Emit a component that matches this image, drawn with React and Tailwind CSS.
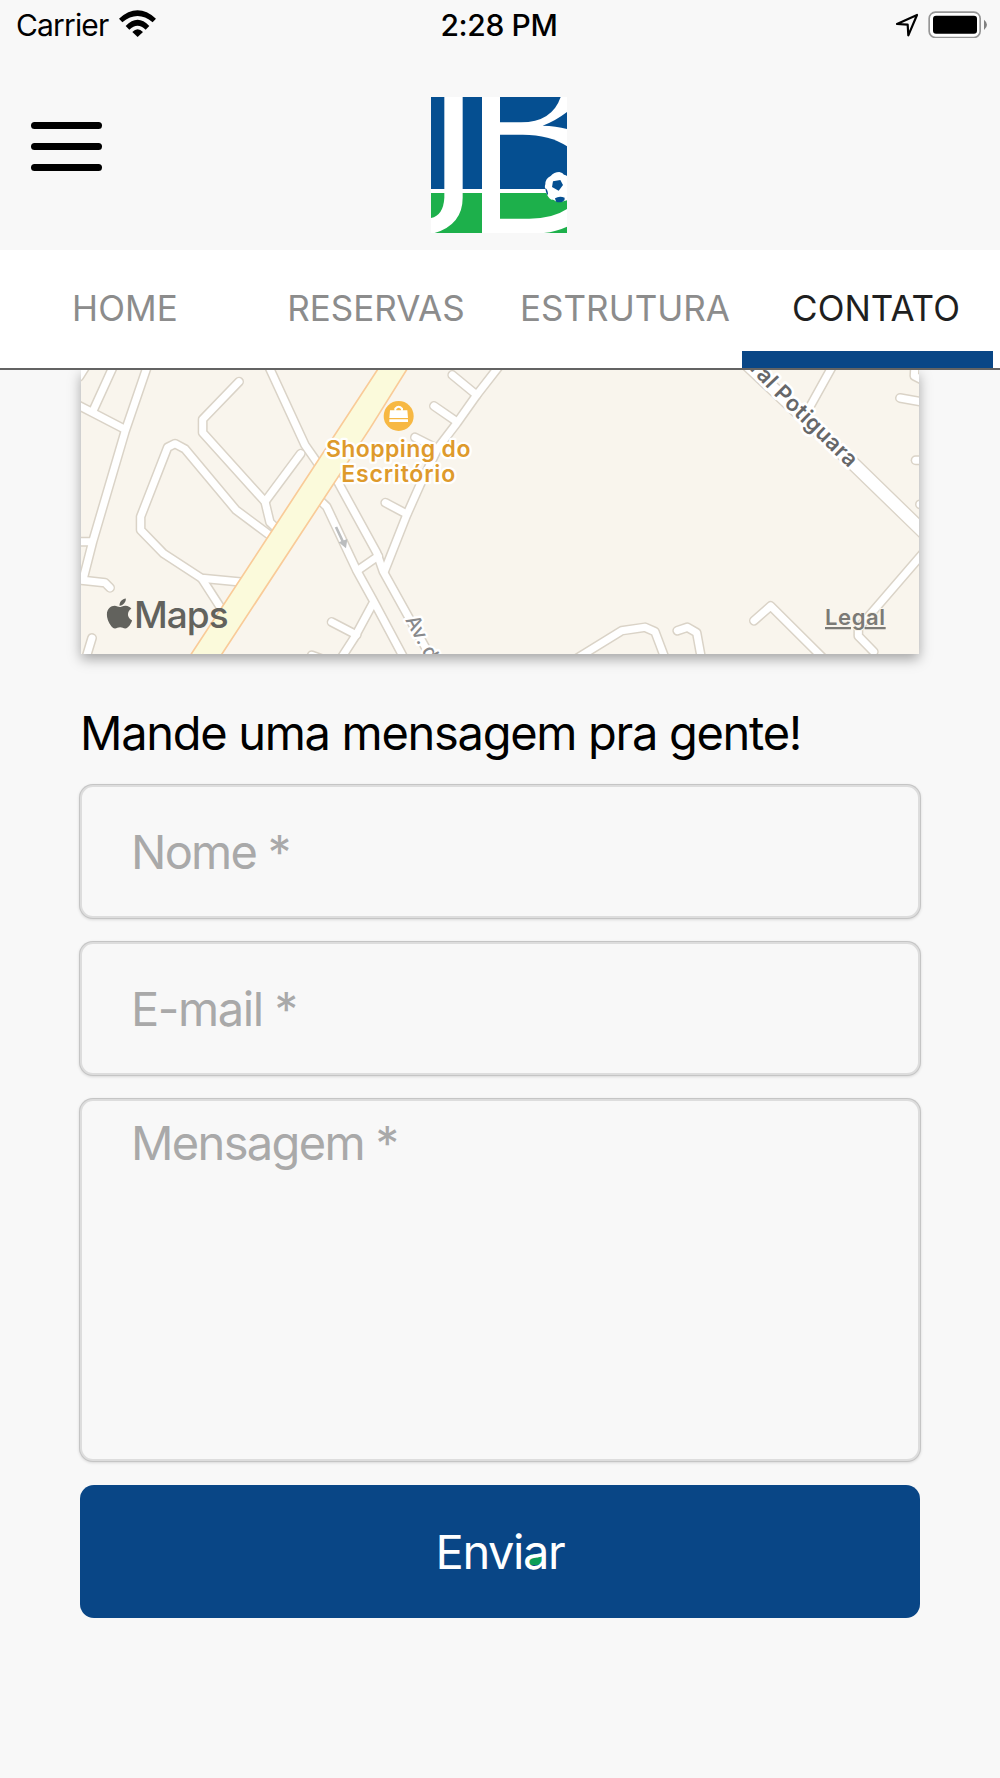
import React from "react";
import { FaApple } from "react-icons/fa";

function WifiIcon() {
  return (
    <svg viewBox="360 30 112 82" className="h-[27.3px] w-[37.3px]" fill="#000">
      <path d="M360 56 Q416 6 471 56 L461 67 Q416 29 370 67Z" />
      <path d="M380 78 Q416 41 451 78 L440 89 Q416 65 391 89Z" />
      <path d="M400 96 Q416 80 432 96 L416 111Z" />
    </svg>
  );
}

function LocationIcon() {
  return (
    <svg viewBox="585 38 72 72" className="h-6 w-6" fill="none" stroke="#000" strokeWidth="6.5" strokeLinejoin="round">
      <path d="M591 71 L651 44 L625 105 L623 73Z" />
    </svg>
  );
}

function BatteryIcon() {
  return (
    <svg viewBox="684 31 180 83" className="h-[27.7px] w-[60px]">
      <rect x="687.5" y="34.5" width="153" height="76" rx="19" fill="#fff" stroke="#969696" strokeWidth="5" />
      <rect x="699" y="45" width="132" height="54" rx="9" fill="#000" />
      <path d="M852 57 Q861 64 861 72.500 Q861 81 852 88Z" fill="#808080" />
    </svg>
  );
}

function StatusBar() {
  return (
    <div className="grid h-[49px] grid-cols-3 items-center text-[30px] leading-none text-black">
      <div className="flex items-center pl-4">
        <span className="tracking-[-0.850px]">Carrier</span>
        <span className="-mt-[2px] ml-[11px]"><WifiIcon /></span>
      </div>
      <div className="pr-[2px] text-center font-medium tracking-[-0.350px]">2:28 PM</div>
      <div className="flex items-center justify-end gap-[9px] pr-[12px]">
        <LocationIcon />
        <BatteryIcon />
      </div>
    </div>
  );
}

function Logo() {
  return (
    <svg viewBox="95 290 408 408" className="h-[136px] w-[136px]">
      <rect x="95" y="290" width="408" height="408" fill="#fff" />
      <g fill="#054f91">
        <rect x="95" y="290" width="40" height="276" />
        <rect x="190" y="290" width="58" height="276" />
        <path d="M302 290 H484 Q458 366 365 366 H302Z" />
        <path d="M503 335 Q468 362 430 376 Q470 377 503 386Z" />
        <path d="M302 403 H370 Q452 403 503 438 V566 H302Z" />
      </g>
      <g fill="#1db04b">
        <path d="M95 578 H135 V592 Q132 645 95 653Z" />
        <path d="M190 578 H248 V698 H106 Q190 672 190 592Z" />
        <path d="M302 578 H503 V626 Q460 655 390 655 H302Z" />
        <path d="M503 679 V698 H434 Q470 694 503 679Z" />
      </g>
      <path
        d="M480 515 Q490 517 494 523 Q500 524 503 527 V600 Q499 602 496 601 Q484 608 469 603 Q463 597 456 598 Q443 590 441 575 Q434 563 438 552 Q438 534 454 527 Q464 515 480 515Z"
        fill="#fff"
      />
      <g fill="#054f91">
        <path d="M461 543 L483 539 L491 554 L478 571 L458 560Z" />
        <path d="M467 594 Q480 585 496 592 Q498 599 490 604 Q480 607 470 604Z" />
        <path d="M438 562 Q447 570 446 585 Q439 578 438 562Z" />
      </g>
    </svg>
  );
}

function Header() {
  return (
    <header className="grid h-[201px] grid-cols-3 pb-[17px]">
      <button className="ml-[31px] flex w-[71px] flex-col justify-center gap-[13.700px] pt-[11px]" aria-label="Menu">
        <span className="h-[7.500px] w-full rounded-full bg-black" />
        <span className="h-[7.500px] w-full rounded-full bg-black" />
        <span className="h-[7.500px] w-full rounded-full bg-black" />
      </button>
      <div className="flex items-end justify-center pr-px">
        <Logo />
      </div>
    </header>
  );
}

const tabs = [
  { label: "HOME", cls: "tracking-[0.100px]" },
  { label: "RESERVAS", cls: "pl-[2px]" },
  { label: "ESTRUTURA", cls: "" },
  { label: "CONTATO", cls: "pl-[2px]", active: true },
];

function Tabs() {
  return (
    <nav className="grid h-[120px] grid-cols-4 border-b-2 border-[#636363] bg-white text-[35px] leading-none">
      {tabs.map((t) => (
        <div
          key={t.label}
          className={`relative flex items-center justify-center pb-px ${t.active ? "text-[#1f1f1f]" : "text-[#8c8c8c]"}`}
        >
          <span className={t.cls}>{t.label}</span>
          {t.active && <span className="absolute bottom-0 -left-2 h-[17px] w-[251px] bg-[#094686]" />}
        </div>
      ))}
    </nav>
  );
}

const streets = [
  "M235 10 L165 215 L68 545 L40 655",
  "M134 10 L68 155",
  "M10 128 L68 158 L165 208",
  "M20 545 H65",
  "M20 659 L105 668 L120 683",
  "M66 834 L46 900",
  "M28 50 L50 15",
  "M507 65 L398 178 V218 L585 425 L600 487 L622 508",
  "M692 281 L585 425",
  "M592 10 L705 255 L742 308",
  "M608 532 L498 450 L345 267 L315 251 L293 262 L212 470 V510 L280 580 L395 655 L520 667",
  "M395 655 L455 748",
  "M745 416 L770 440 L862 635 L910 722 L1005 900",
  "M795 350 L920 578 L940 635 L1090 905",
  "M862 632 L925 588",
  "M910 728 L855 830 L815 892",
  "M785 786 L860 825",
  "M1294 10 L1220 105 L1160 190 L1105 262 L1050 375 L1010 465 L944 632",
  "M1147 45 L1220 105",
  "M1092 138 L1160 185",
  "M1035 232 L1090 260",
  "M946 428 L1010 462",
  "M725 886 L765 900",
  "M1516 898 L1655 812 L1725 802 L1755 815 L1787 900",
  "M1822 812 L1852 802 L1880 818 L1895 900",
  "M2052 782 L2102 738 L2265 900",
  "M2411 875 L2365 828 V805 L2570 567",
  "M2292 10 L2220 140",
  "M2535 15 L2533 48 L2560 62",
  "M2490 114 L2570 128",
  "M2537 301 H2580",
  "M2550 433 H2580",
];

function MapCard() {
  return (
    <div className="mx-[81px] h-[284px] bg-[#f9f5ed] shadow-[0_5px_12px_rgba(0,0,0,0.34)]">
      <svg viewBox="33 30 2514 852" preserveAspectRatio="none" className="block h-full w-full font-[Inter,sans-serif]">
        <g fill="none" strokeLinecap="round" strokeLinejoin="round">
          <g stroke="#dad3c7" strokeWidth="30">
            {streets.map((d) => <path key={d} d={d} />)}
          </g>
          <path d="M2010 -8 L2355 316 L2575 530" stroke="#dad3c7" strokeWidth="44" />
          <g stroke="#fff" strokeWidth="21">
            {streets.map((d) => <path key={d} d={d} />)}
          </g>
          <path d="M2010 -8 L2355 316 L2575 530" stroke="#fff" strokeWidth="36" />
        </g>
        <path d="M352 900 L935 10 H1022 L900 205 L444 900Z" fill="#fbfadb" stroke="#f9cb98" strokeWidth="5" />
        <path d="M798 501 L822 552" stroke="#bbbdbe" strokeWidth="8" />
        <path d="M806 547 L832 537 L828 565Z" fill="#bbbdbe" />

        <circle cx="986" cy="168" r="45" fill="#f7b843" />
        <path d="M976 152 V146 Q986 134 996 146 V152" fill="none" stroke="#fff" strokeWidth="6" />
        <path d="M960 151 H1012 L1014 174 H958Z M958 178 H1014 V186 H958Z" fill="#fff" />

        <g fill="#de9a2c" stroke="#fff" strokeWidth="14" strokeLinejoin="round" paintOrder="stroke" fontSize="69" fontWeight="600">
          <text x="768" y="292" letterSpacing="1.2">Shopping do</text>
          <text x="814" y="365" letterSpacing="2.4">Escritório</text>
        </g>

        <path id="potiguara" d="M2000 -12 L2118 112 L2338 326" fill="none" />
        <text fill="#666769" stroke="#fff" strokeWidth="16" strokeLinejoin="round" paintOrder="stroke" fontSize="66" fontWeight="600" letterSpacing="1.5" textAnchor="end">
          <textPath href="#potiguara" startOffset="100%">ral Potiguara</textPath>
        </text>
        <text
          transform="translate(1005 779) rotate(62)"
          fill="#88898b"
          stroke="#fff"
          strokeWidth="14"
          strokeLinejoin="round"
          paintOrder="stroke"
          fontSize="60"
          fontWeight="500"
        >
          Av. d
        </text>

        <FaApple x="97" y="709" size={103} color="#62625d" />
        <text x="192" y="804" fill="#62625d" fontSize="111" fontWeight="500" letterSpacing="-3">Maps</text>
        <g fill="#7b7a76" stroke="#f9f5ed" strokeWidth="6" paintOrder="stroke">
          <text x="2265" y="795" fontSize="66" fontWeight="600" letterSpacing="1.8">Legal</text>
        </g>
        <path d="M2265 804.500 H2343 M2384 804.500 H2447" stroke="#7b7a76" strokeWidth="7" />
      </svg>
    </div>
  );
}

const fieldClass =
  "block w-full resize-none rounded-[13px] border-2 border-[#dddddd] bg-[#f8f8f8] px-[49px] text-[47px] leading-[56px] text-black outline-none shadow-[0_0_0_1px_#c5c5c5,0_1px_3px_1px_rgba(0,0,0,0.13)] placeholder:text-[#a9a9a9] placeholder:opacity-100";

function ContactForm() {
  return (
    <form className="mx-20 flex flex-col">
      <h1 className="mt-[51px] h-14 whitespace-nowrap text-[47px] leading-[56px] tracking-[-1.300px] text-black">
        Mande uma mensagem pra gente!
      </h1>
      <div className="mt-6 flex flex-col gap-6">
        <input className={`${fieldClass} h-[133px] tracking-[-1.750px]`} placeholder="Nome *" />
        <input className={`${fieldClass} h-[133px] tracking-[-1.400px]`} placeholder="E-mail *" />
        <textarea className={`${fieldClass} h-[362px] pt-[14px] tracking-[-1.650px]`} placeholder="Mensagem *" />
        <button type="button" className="h-[133px] rounded-[14px] bg-[#094686] text-[47px] leading-none tracking-[-1.400px] text-white">
          <span>Envi</span>
          <span className="relative inline-block">
            <span className="absolute bottom-[10px] left-[4px] h-[11px] w-[15px] rounded-full bg-[#0c9d57]" />
            <span className="relative">a</span>
          </span>
          <span>r</span>
        </button>
      </div>
    </form>
  );
}

export default function App() {
  return (
    <div className="h-[1778px] w-full overflow-hidden bg-[#f8f8f8] font-[Inter,sans-serif]">
      <StatusBar />
      <Header />
      <Tabs />
      <main className="overflow-hidden pb-40">
        <MapCard />
        <ContactForm />
      </main>
    </div>
  );
}
